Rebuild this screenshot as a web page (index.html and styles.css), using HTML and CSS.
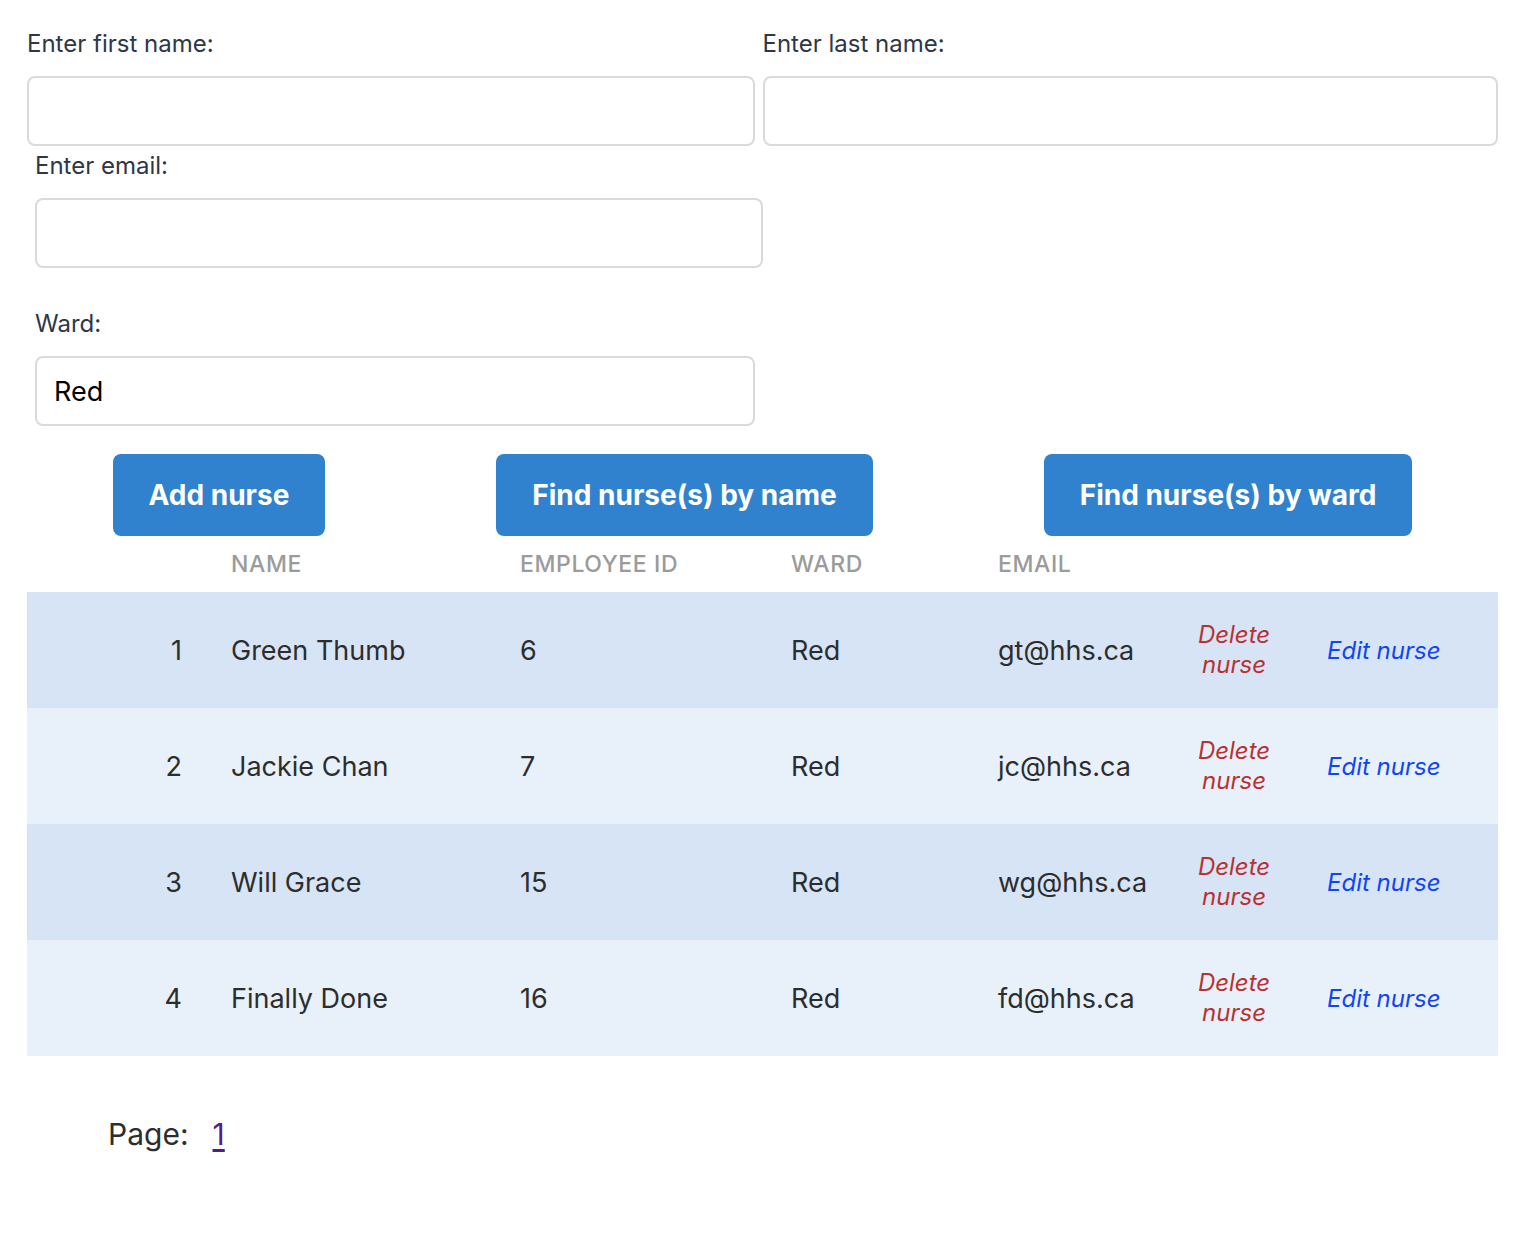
FILE: index.html
```html
<!DOCTYPE html>
<html lang="en">
<head>
<meta charset="utf-8">
<title>Nurses</title>
<link rel="stylesheet" href="styles.css">
</head>
<body>
<main class="page">
  <div class="name-row">
    <div class="field field-first">
      <label class="field-label" for="first">Enter first name:</label>
      <input class="field-input" id="first" type="text">
    </div>
    <div class="field field-last">
      <label class="field-label" for="last">Enter last name:</label>
      <input class="field-input" id="last" type="text">
    </div>
  </div>
  <div class="field field-email">
    <label class="field-label" for="email">Enter email:</label>
    <input class="field-input" id="email" type="text">
  </div>
  <div class="field field-ward">
    <label class="field-label" for="ward">Ward:</label>
    <input class="field-input" id="ward" type="text" value="Red">
  </div>
  <div class="actions">
    <button class="btn" type="button">Add nurse</button>
    <button class="btn" type="button">Find nurse(s) by name</button>
    <button class="btn" type="button">Find nurse(s) by ward</button>
  </div>
  <table class="nurses">
    <colgroup>
      <col class="c-idx"><col class="c-name"><col class="c-id"><col class="c-ward"><col class="c-email"><col class="c-del"><col class="c-edit">
    </colgroup>
    <thead>
      <tr>
        <th></th><th>Name</th><th>Employee ID</th><th>Ward</th><th>Email</th><th></th><th></th>
      </tr>
    </thead>
    <tbody>
      <tr>
        <td class="idx">1</td><td>Green Thumb</td><td>6</td><td>Red</td><td>gt@hhs.ca</td>
        <td class="del"><a href="#">Delete nurse</a></td><td class="edit"><a href="#">Edit nurse</a></td>
      </tr>
      <tr>
        <td class="idx">2</td><td>Jackie Chan</td><td>7</td><td>Red</td><td>jc@hhs.ca</td>
        <td class="del"><a href="#">Delete nurse</a></td><td class="edit"><a href="#">Edit nurse</a></td>
      </tr>
      <tr>
        <td class="idx">3</td><td>Will Grace</td><td>15</td><td>Red</td><td>wg@hhs.ca</td>
        <td class="del"><a href="#">Delete nurse</a></td><td class="edit"><a href="#">Edit nurse</a></td>
      </tr>
      <tr>
        <td class="idx">4</td><td>Finally Done</td><td>16</td><td>Red</td><td>fd@hhs.ca</td>
        <td class="del"><a href="#">Delete nurse</a></td><td class="edit"><a href="#">Edit nurse</a></td>
      </tr>
    </tbody>
  </table>
  <div class="pager">
    <span>Page:</span>
    <a class="pager-link" href="#">1</a>
  </div>
</main>
</body>
</html>
```
FILE: styles.css
```css
* { box-sizing: border-box; }

body {
  margin: 0;
  background: #ffffff;
  font-family: Inter, "Noto Sans", sans-serif;
}

.page {
  padding: 28px 28px 60px 27px;
}

.name-row {
  display: flex;
}

.field-label {
  display: block;
  font-size: 24px;
  line-height: 32px;
  color: #2d3748;
  margin-bottom: 16px;
}

.field-input {
  display: block;
  width: 100%;
  height: 70px;
  border: 2px solid #dadada;
  border-radius: 8px;
  padding: 0 17px;
  font-family: Inter, "Noto Sans", sans-serif;
  font-size: 27px;
  color: #000;
  background: #fff;
  outline: none;
}

.field-first { width: 728px; }
.field-last { width: 736px; margin-left: 8px; }
.field-email { width: 728px; margin: 4px 0 0 8px; }
.field-ward { width: 720px; margin: 40px 0 0 8px; }

.actions {
  display: flex;
  justify-content: space-around;
  margin-top: 28px;
}

.btn {
  height: 82px;
  padding: 0 36px;
  border: none;
  border-radius: 8px;
  background: #3182ce;
  color: #ffffff;
  font-family: Inter, "Noto Sans", sans-serif;
  font-weight: 700;
  font-size: 28px;
}

.nurses {
  width: 1471px;
  border-collapse: collapse;
  table-layout: fixed;
}

.c-idx { width: 180px; }
.c-name { width: 289px; }
.c-id { width: 271px; }
.c-ward { width: 207px; }
.c-email { width: 200px; }
.c-del { width: 120px; }
.c-edit { width: 204px; }

.nurses th {
  height: 56px;
  padding: 0 0 0 24px;
  text-align: left;
  font-weight: 500;
  font-size: 23px;
  letter-spacing: 0.6px;
  text-transform: uppercase;
  color: #9b9b9b;
}

.nurses tbody tr { height: 116px; }
.nurses tbody tr:nth-child(odd) { background: #d6e4f6; }
.nurses tbody tr:nth-child(even) { background: #e8f0fa; }

.nurses td {
  padding: 0 0 0 24px;
  font-size: 27px;
  color: #2d2d2d;
  white-space: nowrap;
}

.nurses td.idx {
  padding: 0 25px 0 0;
  text-align: right;
}

.nurses td.del {
  padding: 0 22px;
  text-align: center;
  white-space: normal;
  font-size: 24px;
  line-height: 30px;
}

.nurses td.edit {
  padding-left: 33px;
  font-size: 24px;
}

.del a, .edit a {
  font-style: italic;
  text-decoration: none;
}

.del a { color: #b83232; }
.edit a { color: #0f45f5; }

.pager {
  display: flex;
  gap: 24px;
  margin-top: 60px;
  padding-left: 81px;
  font-size: 30px;
  line-height: 36px;
  color: #2d2d2d;
}

.pager-link {
  color: #551a8b;
  text-decoration: underline;
  text-underline-offset: 4px;
}
```
